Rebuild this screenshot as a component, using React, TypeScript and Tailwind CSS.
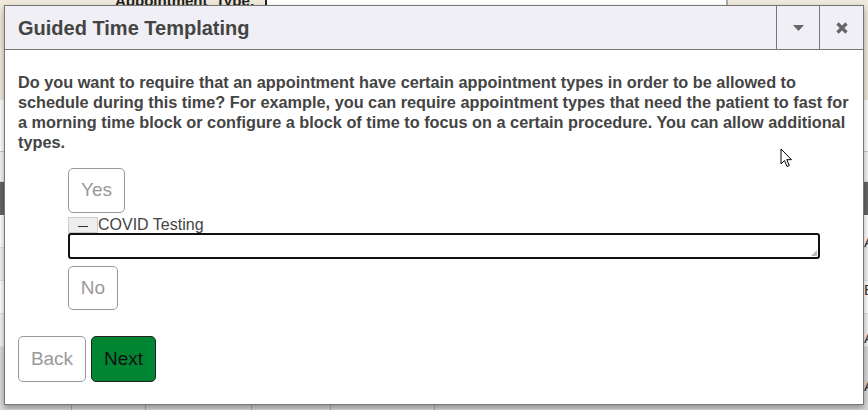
import React from "react";

export default function App() {
  const font = { fontFamily: '"Liberation Sans", Arial, sans-serif' };
  return (
    <div className="relative w-[868px] h-[410px] overflow-hidden bg-[#f7f7f7]" style={font}>
      {/* background app */}
      <div className="flex flex-col h-full">
        <div className="flex h-[100px] bg-[#efe9dc]">
          <div className="w-[267px] border-r-2 border-[#222] text-[15px] font-bold text-[#222] pl-[115px] leading-[10px] -mt-[4px]">Appointment_Type:</div>
          <div className="w-[461px] h-[6px] bg-white border-r-2 border-[#aaa]"></div>
        </div>
        <div className="h-[52px] bg-white border-b border-[#ccc]"></div>
        <div className="h-[30px] bg-[#f4f4f4] border-b border-[#ddd]"></div>
        <div className="h-[33px] bg-[#666]"></div>
        <div className="flex-1 bg-white flex flex-col">
          <div className="h-[33px] border-b border-[#e2e2e2]"></div>
          <div className="h-[33px] bg-[#f2f2f2] border-b border-[#e2e2e2]"></div>
          <div className="h-[33px] border-b border-[#e2e2e2]"></div>
          <div className="h-[33px] bg-[#f2f2f2] border-b border-[#e2e2e2]"></div>
          <div className="flex-1 bg-[#d9d9d9] flex">
            <div className="w-[72px] border-r border-[#aaa]"></div>
            <div className="w-[74px] border-r border-[#aaa]"></div>
            <div className="w-[106px] border-r border-[#aaa]"></div>
            <div className="w-[79px] border-r border-[#aaa]"></div>
            <div className="w-[104px] border-r border-[#aaa]"></div>
          </div>
        </div>
      </div>
      <div className="absolute right-0 top-[218px] w-[5px] text-[15px] text-[#333] leading-[48px]">
        <div className="pl-[1px]">A</div>
        <div className="pl-[1px]">B</div>
        <div className="pl-[1px]">A</div>
        <div className="pl-[1px]">A</div>
      </div>

      {/* dialog */}
      <div className="absolute left-[4px] top-[5px] w-[860px] h-[400px] bg-white border border-[#777] shadow-[0_3px_6px_rgba(0,0,0,0.35)] flex flex-col">
        <div className="h-[44px] bg-[#efeff5] border-b border-[#777] flex items-center">
          <div className="flex-1 pl-[13px] text-[20px] font-bold text-[#444]">Guided Time Templating</div>
          <div className="w-[43px] h-full border-l border-[#777] flex items-center justify-center">
            <svg width="11" height="6" viewBox="0 0 11 6"><path d="M0 0 L11 0 L5.5 6 Z" fill="#666" /></svg>
          </div>
          <div className="w-[44px] h-full border-l border-[#777] flex items-center justify-center">
            <svg width="12" height="12" viewBox="0 0 12 12"><path d="M1.5 1.5 L10.5 10.5 M10.5 1.5 L1.5 10.5" stroke="#666" strokeWidth="3.2" /></svg>
          </div>
        </div>
        <div className="flex-1 flex flex-col pl-[13px] pr-[8px] pt-[22px]">
          <p className="text-[16.3px] leading-[20px] font-bold text-[#444]">
            Do you want to require that an appointment have certain appointment types in order to be allowed to schedule during this time? For example, you can require appointment types that need the patient to fast for a morning time block or configure a block of time to focus on a certain procedure. You can allow additional types.
          </p>
          <div className="pl-[50px] mt-[16px] flex flex-col items-start">
            <button className="w-[57px] h-[45px] border border-[#999] rounded-[5px] text-[19px] text-[#999] bg-white">Yes</button>
            <div className="flex items-end mt-[3px] h-[17px]">
              <div className="w-[30px] h-[16px] bg-[#eee] border border-[#ccc] flex items-center justify-center">
                <div className="w-[10px] h-[1px] bg-[#333] mt-[3px]"></div>
              </div>
              <span className="text-[16px] leading-[17px] text-[#444]">COVID Testing</span>
            </div>
            <div className="relative w-[752px] h-[26px] border-2 border-[#111] rounded-[3px] bg-white">
              <svg className="absolute right-[1px] bottom-[1px]" width="6" height="6" viewBox="0 0 6 6"><path d="M6 0 L6 6 L0 6 Z" fill="#bbb" /></svg>
            </div>
            <button className="mt-[7px] w-[50px] h-[44px] border border-[#999] rounded-[5px] text-[19px] text-[#999] bg-white">No</button>
          </div>
          <div className="flex gap-[5px] mt-[26px]">
            <button className="w-[68px] h-[46px] border border-[#999] rounded-[5px] text-[19px] text-[#999] bg-white">Back</button>
            <button className="w-[65px] h-[46px] border border-[#222] rounded-[5px] text-[19px] text-[#111] bg-[#008533]">Next</button>
          </div>
        </div>
      </div>

      {/* cursor */}
      <svg className="absolute left-[780px] top-[148px]" width="13" height="20" viewBox="0 0 13 20">
        <path d="M1 1 L1 16 L4.5 12.5 L7 18.5 L9.3 17.5 L6.8 11.7 L11.5 11.7 Z" fill="#fff" stroke="#000" strokeWidth="1" />
      </svg>
    </div>
  );
}
